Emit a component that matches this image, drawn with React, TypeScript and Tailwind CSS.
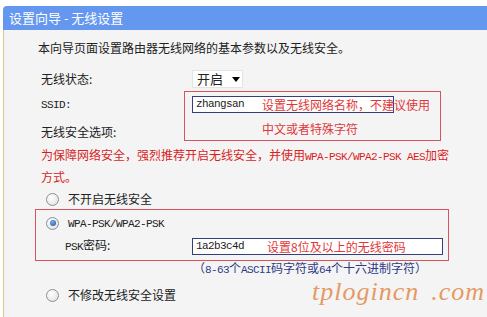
const M = ({ children }: { children: React.ReactNode }) => (
  <span className="font-[family-name:'Liberation_Mono',monospace] text-[11px] tracking-[-0.6px]">{children}</span>
);

const Radio = ({ checked = false }: { checked?: boolean }) => (
  <span className="w-[13px] h-[13px] rounded-full border border-[#8d9096] bg-[radial-gradient(circle_at_40%_35%,#ffffff,#dcdcdc)] flex items-center justify-center shrink-0">
    {checked && <span className="w-[6px] h-[6px] rounded-full bg-[radial-gradient(circle_at_40%_35%,#6fb2f0,#1b4f9a)]" />}
  </span>
);

export default function App() {
  return (
    <div className="w-[487px] h-[317px] bg-white pt-[6px] pl-[3px] overflow-hidden relative font-[family-name:'Noto_Sans_CJK_SC',sans-serif] text-[12px] text-[#222]">
      <div className="h-[24px] bg-[#6497ef] rounded-tl-[4px] flex items-center pl-[6px] text-white text-[13px]">
        设置向导 - 无线设置
      </div>
      <div className="h-[287px] border-l border-[#e2c48a] bg-[#f4f4f4] pt-[8px]">
        <div className="pl-[34px] leading-[20px]">本向导页面设置路由器无线网络的基本参数以及无线安全。</div>
        <div className="pl-[37px]">
          <div className="flex items-center h-[18px] mt-[12px]">
            <div className="w-[151px] leading-[18px]">无线状态:</div>
            <div className="w-[51px] h-[18px] bg-white border border-[#e4e4e4] flex items-center pl-[4px] text-[13px] leading-[16px]">
              <span>开启</span>
              <span className="ml-[9px] w-0 h-0 border-l-[4px] border-r-[4px] border-t-[5px] border-l-transparent border-r-transparent border-t-black" />
            </div>
          </div>
          <div className="flex mt-[3px]">
            <div className="w-[143px] shrink-0">
              <div className="mt-[2px] leading-[20px]"><M>SSID:</M></div>
              <div className="mt-[7px] leading-[20px]">无线安全选项:</div>
            </div>
            <div className="relative w-[257px] h-[50px] border border-[#d9535f] pt-[4px] pl-[7px]">
              <div className="w-[202px] h-[17px] bg-white border border-[#35407a] flex items-center pl-[3px] leading-[15px]">
                <M>zhangsan</M>
              </div>
              <div className="absolute left-[77px] top-[4px] leading-[18px] text-[#e0383a] whitespace-nowrap">设置无线网络名称，不建议使用</div>
              <div className="absolute left-[77px] top-[28px] leading-[18px] text-[#e0383a] whitespace-nowrap">中文或者特殊字符</div>
            </div>
          </div>
          <div className="mt-[3px] leading-[19px] text-[#d81e1e] whitespace-nowrap">
            为保障网络安全，强烈推荐开启无线安全，并使用<M>WPA-PSK/WPA2-PSK AES</M>加密
            <br />
            方式。
          </div>
          <div className="mt-[3px] h-[20px] flex items-center pl-[5px]">
            <Radio />
            <span className="ml-[9px] leading-[20px]">不开启无线安全</span>
          </div>
          <div className="-ml-[6px] w-[414px] h-[52px] border border-[#d9535f] pt-[3px]">
            <div className="h-[20px] flex items-center pl-[10px]">
              <Radio checked />
              <span className="ml-[9px] leading-[20px]"><M>WPA-PSK/WPA2-PSK</M></span>
            </div>
            <div className="mt-[3px] flex items-center pl-[29px]">
              <div className="w-[127px] leading-[17px]"><M>PSK</M>密码:</div>
              <div className="relative w-[251px] h-[17px] bg-white border border-[#35407a] flex items-center pl-[3px] leading-[15px]">
                <M>1a2b3c4d</M>
                <span className="absolute left-[74px] top-[0px] leading-[16px] text-[#e0383a] whitespace-nowrap">设置8位及以上的无线密码</span>
              </div>
            </div>
          </div>
          <div className="pl-[152px] leading-[14px] text-[#2e3b86] whitespace-nowrap">
            （<M>8-63</M>个<M>ASCII</M>码字符或<M>64</M>个十六进制字符）
          </div>
          <div className="mt-[8px] h-[20px] flex items-center pl-[5px]">
            <Radio />
            <span className="ml-[9px] leading-[20px]">不修改无线安全设置</span>
          </div>
        </div>
      </div>
      <div className="absolute left-[312px] top-[279px] leading-[26px] text-[26px] italic font-[family-name:'Liberation_Serif',serif] text-[#e49a64] tracking-[1px] whitespace-nowrap">
        tplogincn<span className="ml-[12px]">.com</span>
      </div>
    </div>
  );
}
